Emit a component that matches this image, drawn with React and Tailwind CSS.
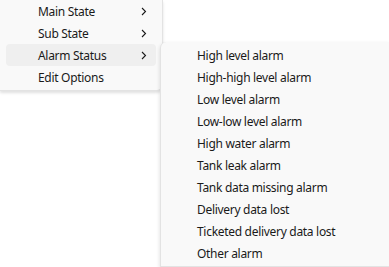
import React from "react";

const main = ["Main State", "Sub State", "Alarm Status", "Edit Options"];
const sub = [
  "High level alarm",
  "High-high level alarm",
  "Low level alarm",
  "Low-low level alarm",
  "High water alarm",
  "Tank leak alarm",
  "Tank data missing alarm",
  "Delivery data lost",
  "Ticketed delivery data lost",
  "Other alarm",
];

function Chevron() {
  return (
    <svg width="6" height="9" viewBox="0 0 6 9" className="block">
      <path d="M1 1 L4.5 4.5 L1 8" fill="none" stroke="#1a1a1a" strokeWidth="1.1" />
    </svg>
  );
}

export default function App() {
  return (
    <div
      className="relative w-[389px] h-[267px] bg-white text-[12px] tracking-[-0.3px] text-[#1a1a1a]"
      style={{ fontFamily: '"Segoe UI", "Noto Sans", sans-serif' }}
    >
      <div className="w-[163px] bg-[#f9f9f9] border-r border-b border-[#e3e3e3] rounded-br-[6px] shadow-[0_2px_3px_rgba(0,0,0,0.12)] pb-[2px] flex flex-col">
        {main.map((m, i) => (
          <div key={m} className="h-[22px] px-[6px] flex">
            <div
              className={
                "flex-1 flex items-center rounded-[4px] pl-[32px] pr-[9px] " +
                (i === 2 ? "bg-[#efefef]" : "")
              }
            >
              <span className="flex-1 leading-none pt-[1px]">{m}</span>
              {i < 3 && <Chevron />}
            </div>
          </div>
        ))}
      </div>
      <div className="absolute left-[160px] top-[42px] w-[229px] h-[225px] bg-[#f9f9f9] border-l border-b border-[#e3e3e3] rounded-tl-[6px] shadow-[0_2px_4px_rgba(0,0,0,0.14)] pt-[2px] flex flex-col">
        {sub.map((s) => (
          <div key={s} className="h-[22px] flex items-center pl-[36px] pt-[1px] leading-none">
            {s}
          </div>
        ))}
      </div>
    </div>
  );
}
